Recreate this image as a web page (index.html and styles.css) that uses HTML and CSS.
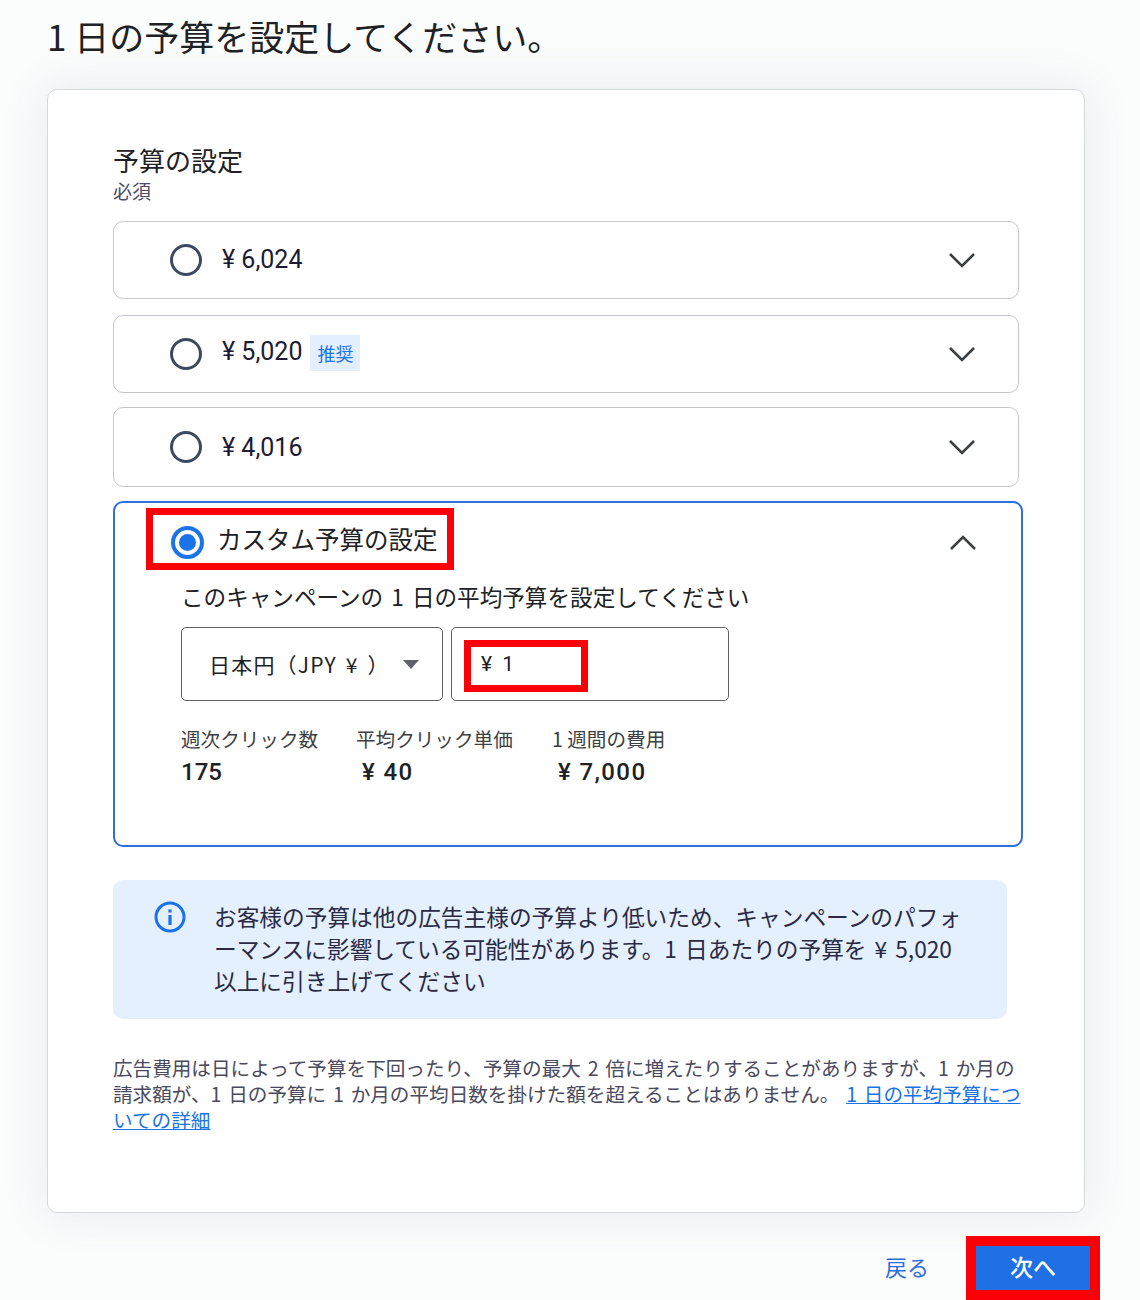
FILE: index.html
```html
<!DOCTYPE html>
<html lang="ja">
<head>
<meta charset="utf-8">
<title>1 日の予算を設定</title>
<link rel="stylesheet" href="styles.css">
</head>
<body>
<main class="page">
  <h1 class="title">1 日の予算を設定してください。</h1>
  <section class="card">
    <h2 class="section-title">予算の設定</h2>
    <p class="required">必須</p>
    <div class="option option-1">
      <span class="radio"></span>
      <span class="amount">¥ 6,024</span>
      <svg class="chev" viewBox="0 0 28 16" width="28" height="16"><path d="M2 2l12 12L26 2" fill="none" stroke="#3c4043" stroke-width="2.6"/></svg>
    </div>
    <div class="option option-2">
      <span class="radio"></span>
      <span class="amount amount-raised">¥ 5,020</span>
      <span class="tag">推奨</span>
      <svg class="chev" viewBox="0 0 28 16" width="28" height="16"><path d="M2 2l12 12L26 2" fill="none" stroke="#3c4043" stroke-width="2.6"/></svg>
    </div>
    <div class="option option-3">
      <span class="radio"></span>
      <span class="amount amount-low">¥ 4,016</span>
      <svg class="chev" viewBox="0 0 28 16" width="28" height="16"><path d="M2 2l12 12L26 2" fill="none" stroke="#3c4043" stroke-width="2.6"/></svg>
    </div>
    <div class="custom">
      <div class="custom-head">
        <div class="mark-box">
          <span class="radio-on"><span class="radio-dot"></span></span>
          <span class="custom-label">カスタム予算の設定</span>
        </div>
        <svg class="chev-up" viewBox="0 0 28 16" width="28" height="16"><path d="M2 14L14 2l12 12" fill="none" stroke="#3c4043" stroke-width="2.6"/></svg>
      </div>
      <p class="custom-desc">このキャンペーンの 1 日の平均予算を設定してください</p>
      <div class="fields">
        <div class="select">
          <span class="select-text">日本円（JPY ¥ ）</span>
          <span class="caret"></span>
        </div>
        <div class="input">
          <span class="input-mark">¥ 1</span>
        </div>
      </div>
      <div class="stats">
        <div class="stat stat-1"><div class="stat-label">週次クリック数</div><div class="stat-value">175</div></div>
        <div class="stat stat-2"><div class="stat-label">平均クリック単価</div><div class="stat-value">¥ 40</div></div>
        <div class="stat stat-3"><div class="stat-label">1 週間の費用</div><div class="stat-value">¥ 7,000</div></div>
      </div>
    </div>
    <div class="notice">
      <svg class="info" viewBox="0 0 32 32" width="32" height="32"><circle cx="16" cy="16" r="14" fill="none" stroke="#1a73e8" stroke-width="3"/><rect x="14.4" y="14" width="3.2" height="10" fill="#1a73e8"/><rect x="14.4" y="8.4" width="3.2" height="3.2" fill="#1a73e8"/></svg>
      <p class="notice-text">お客様の予算は他の広告主様の予算より低いため、キャンペーンのパフォーマンスに影響している可能性があります。1 日あたりの予算を ¥ 5,020 以上に引き上げてください</p>
    </div>
    <p class="legal">広告費用は日によって予算を下回ったり、予算の最大 2 倍に増えたりすることがありますが、1 か月の請求額が、1 日の予算に 1 か月の平均日数を掛けた額を超えることはありません。 <a class="link" href="#">1 日の平均予算についての詳細</a></p>
  </section>
  <footer class="actions">
    <a class="back" href="#">戻る</a>
    <div class="next-mark"><button class="next" type="button">次へ</button></div>
  </footer>
</main>
</body>
</html>
```
FILE: styles.css
```css
* { box-sizing: border-box; }
html, body { margin: 0; height: 1300px; overflow: hidden; }
body {
  background: #fbfcfc;
  font-family: "Noto Sans CJK JP", "Roboto", sans-serif;
  color: #202124;
}
.page { padding: 0 55px 0 47px; }
.title { margin: 0; height: 89px; padding-top: 10px; font-size: 35px; line-height: 52px; font-weight: 400; color: #202124; white-space: nowrap; }
.card {
  height: 1124px;
  background: #fff;
  border: 1px solid #d5d9de;
  border-radius: 10px;
  padding: 50px 65px 0;
  box-shadow: 0 0 45px rgba(90, 115, 140, .13);
}
.section-title { margin: 0; font-size: 26px; line-height: 40px; font-weight: 400; }
.required { margin: 0 0 19px; font-size: 19px; line-height: 22px; color: #4a4a6a; }
.option {
  height: 78px;
  display: flex;
  align-items: center;
  width: 906px;
  margin-bottom: 16px;
  padding: 0 42px 0 56px;
  border: 1px solid #c4c7d0;
  border-radius: 10px;
}
.option-2 { margin-bottom: 14px; }
.option-3 { height: 80px; }
.radio { width: 32px; height: 32px; border: 3px solid #3c4a60; border-radius: 50%; margin-right: 20px; flex: none; }
.amount { font-family: "Roboto", sans-serif; font-size: 25px; color: #1c1b33; margin-bottom: 2px; }
.amount-raised { margin-bottom: 6px; }
.amount-low { margin-bottom: 0; }
.tag { margin: 0 0 2px 8px; padding: 0 7px; height: 36px; line-height: 36px; background: #e3effd; color: #1a73e8; font-size: 18px; }
.chev { margin-left: auto; }
.custom {
  width: 910px;
  height: 346px;
  margin-top: -2px;
  border: 2px solid #2f6fe0;
  border-radius: 10px;
  padding: 5px 44px 0 31px;
}
.custom-head { display: flex; align-items: center; justify-content: space-between; height: 62px; }
.mark-box {
  width: 308px; height: 62px;
  display: flex; align-items: center;
  border: 7px solid #fb0007;
  padding-left: 18px;
}
.radio-on { width: 33px; height: 33px; margin-top: 6px; border: 4px solid #1a73e8; border-radius: 50%; display: flex; align-items: center; justify-content: center; margin-right: 14px; flex: none; }
.radio-dot { width: 17px; height: 17px; background: #1a73e8; border-radius: 50%; }
.custom-label { font-size: 24.5px; line-height: 36px; white-space: nowrap; margin-left: -1px; }
.chev-up { margin-top: 8px; }
.custom-desc { margin: 10px 0 13px 35px; font-size: 22.6px; word-spacing: 3px; line-height: 34px; white-space: nowrap; }
.fields { display: flex; gap: 8px; margin-left: 35px; }
.select {
  width: 262px; height: 74px;
  display: flex; align-items: center; justify-content: space-between;
  padding: 0 23px 0 27px;
  border: 1px solid #5f6368; border-radius: 5px;
  font-size: 21px;
}
.select-text { letter-spacing: 1.2px; word-spacing: 3px; white-space: nowrap; }
.caret { width: 0; height: 0; border-left: 8px solid transparent; border-right: 8px solid transparent; border-top: 9px solid #5f6368; }
.input { width: 278px; height: 74px; border: 1px solid #5f6368; border-radius: 5px; padding: 12px 0 0 12px; }
.input-mark { display: block; width: 124px; height: 52px; border: 7px solid #fb0007; padding-left: 10px; font-family: "Roboto", sans-serif; font-size: 21px; word-spacing: 5px; line-height: 34px; }
.stats { display: flex; margin: 23px 0 0 35px; }
.stat-1 { width: 175px; }
.stat-2 { width: 196px; }
.stat-label { font-size: 19.6px; line-height: 30px; color: #3c4043; white-space: nowrap; }
.stat-value { margin-top: 1px; font-family: "Roboto", sans-serif; font-size: 24px; line-height: 34px; font-weight: 500; color: #202124; }
.stat-2 .stat-value, .stat-3 .stat-value { padding-left: 6px; letter-spacing: 1.4px; }
.notice {
  width: 894px; height: 139px;
  margin-top: 33px;
  display: flex;
  align-items: flex-start;
  padding: 21px 40px 0 41px;
  background: #e4f0fd;
  border-radius: 10px;
}
.info { flex: none; margin-right: 28px; }
.notice-text { margin: 0; font-size: 22.7px; word-spacing: 3px; line-height: 32px; color: #2a2a44; }
.legal { margin: 36px 0 0; width: 908px; font-size: 19.6px; word-spacing: 2.4px; line-height: 26px; color: #4a4a5e; }
.link { color: #1a73e8; }
.actions { height: 87px; display: flex; justify-content: flex-end; align-items: flex-end; }
.back { margin: 0 37px 20px 0; font-size: 22px; line-height: 28px; color: #2f6fe0; text-decoration: none; }
.next-mark { width: 134px; height: 64px; border: 10px solid #fb0007; margin-right: -15px; }
.next { display: block; width: 100%; height: 100%; padding: 0 0 4px; border: 0; background: #1f6fe5; color: #fff; font-family: inherit; font-size: 23px; font-weight: 500; }
```
